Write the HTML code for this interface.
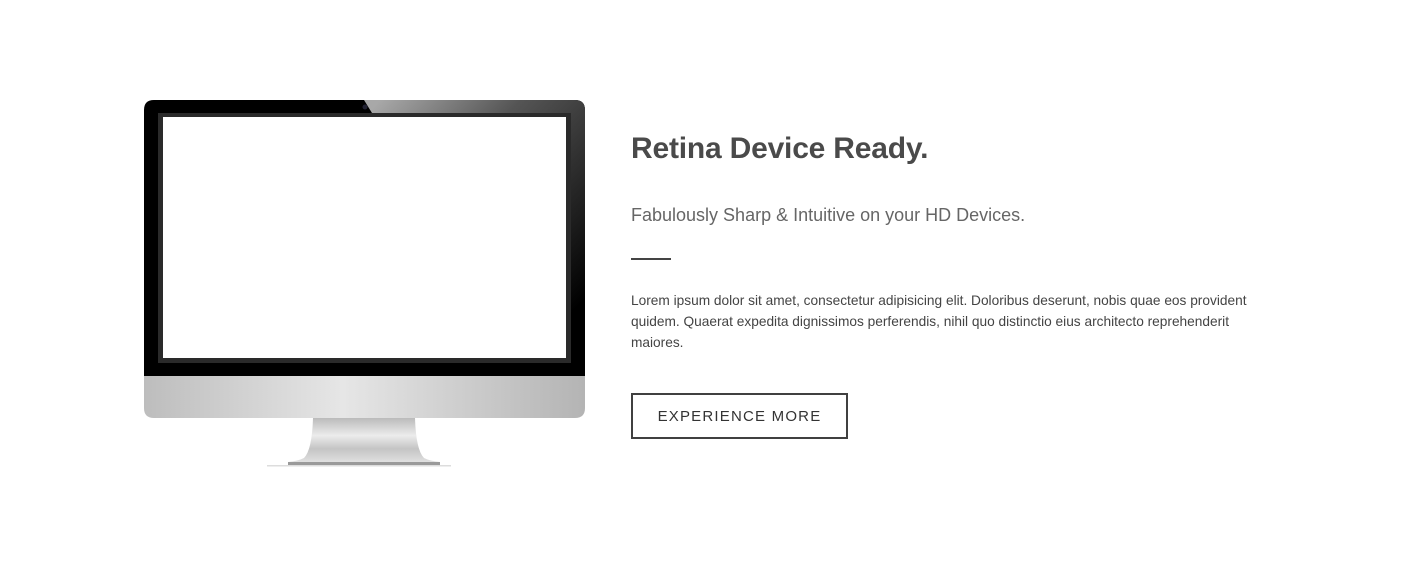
<!DOCTYPE html>
<html><head><meta charset="utf-8"><style>
html,body{margin:0;padding:0;background:#fff;width:1427px;height:571px;overflow:hidden;position:relative}
.a{position:absolute}
h2{position:absolute;left:631px;top:129px;margin:0;font:bold 30px/40px "Liberation Sans",sans-serif;color:#4a4a4a;letter-spacing:-0.2px}
.sub{position:absolute;left:631px;top:203px;font:18px/24px "Liberation Sans",sans-serif;color:#666}
.p{position:absolute;left:631px;top:290px;width:625px;font:13.7px/21px "Liberation Sans",sans-serif;color:#444}
.btn{position:absolute;left:631px;top:393px;width:213px;height:42px;border:2px solid #404040;font:15px/44px "Liberation Sans",sans-serif;letter-spacing:1.2px;color:#333;text-align:center}
</style></head><body>
<svg class="a" style="left:0;top:0" width="700" height="571" viewBox="0 0 700 571">
<defs>
<linearGradient id="chin" x1="0" x2="1"><stop offset="0" stop-color="#bdbdbd"/><stop offset="0.45" stop-color="#e6e6e6"/><stop offset="1" stop-color="#b4b4b4"/></linearGradient>
<linearGradient id="gl" gradientUnits="userSpaceOnUse" x1="380" y1="100" x2="585" y2="300"><stop offset="0" stop-color="#a8a8a8"/><stop offset="0.35" stop-color="#555"/><stop offset="1" stop-color="#000"/></linearGradient>
<linearGradient id="neck" x1="0" y1="0" x2="0" y2="1"><stop offset="0" stop-color="#bbb"/><stop offset="0.4" stop-color="#ececec"/><stop offset="0.7" stop-color="#c4c4c4"/><stop offset="1" stop-color="#e0e0e0"/></linearGradient>
</defs>
<path d="M154 100H575Q585 100 585 110V376H144V110Q144 100 154 100Z" fill="#000"/>
<path d="M364 100H575Q585 100 585 110V376H571V113H372Z" fill="url(#gl)"/>
<circle cx="365" cy="107" r="2.5" fill="#223"/>
<rect x="158" y="113" width="413" height="250" fill="#2a2a2a"/>
<rect x="163" y="117" width="403" height="241" fill="#fff"/>
<path d="M144 376H585V408Q585 418 575 418H154Q144 418 144 408Z" fill="url(#chin)"/>
<path d="M313 418H415Q416 450 424 458Q430 461 440 462H288Q298 461 304 458Q312 450 313 418Z" fill="url(#neck)"/>
<rect x="288" y="462" width="152" height="4" fill="#9a9a9a"/>
<rect x="267" y="465" width="184" height="1.5" fill="#ddd"/>
</svg>
<h2>Retina Device Ready.</h2>
<div class="sub">Fabulously Sharp &amp; Intuitive on your HD Devices.</div>
<div class="a" style="left:631px;top:258px;width:40px;height:2px;background:#444"></div>
<div class="p">Lorem ipsum dolor sit amet, consectetur adipisicing elit. Doloribus deserunt, nobis quae eos provident quidem. Quaerat expedita dignissimos perferendis, nihil quo distinctio eius architecto reprehenderit maiores.</div>
<div class="btn">EXPERIENCE MORE</div>
</body></html>
